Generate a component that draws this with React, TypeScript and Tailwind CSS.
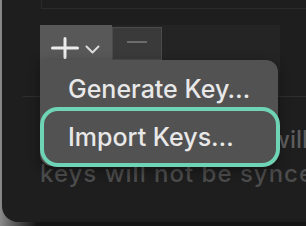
import React from 'react';

const font = { fontFamily: 'Inter, "Noto Sans", sans-serif' };

const App: React.FC = () => {
  return (
    <div className="w-[306px] h-[226px] bg-linear-to-r from-[#8a8a8a] to-[#151515] to-[12%] overflow-hidden" style={font}>
      <div className="relative ml-[2px] w-[304px] h-[222px] bg-[#1e1e1e] rounded-bl-[16px] overflow-hidden">
        {/* box above */}
        <div className="ml-[39px] h-[9px] border-l border-b border-[#2b2b2b]" />

        {/* table area with +/- bar */}
        <div className="ml-[38px] mt-[16px] w-[240px] h-[71px] bg-[#242424]">
          <div className="flex items-start">
            <div className="w-[72px] h-[35px] bg-[#585858] flex items-start pt-[12px] pl-[11px] gap-[6px]">
              <svg width="28" height="22" viewBox="0 0 28 22" className="text-[#ececec]">
                <path d="M14 1.5v19M1.5 11h25" stroke="currentColor" strokeWidth="3" strokeLinecap="round" />
              </svg>
              <svg width="15" height="9" viewBox="0 0 15 9" className="mt-[8px] text-[#dcdcdc]">
                <path d="M1.5 1.5l6 6 6-6" stroke="currentColor" strokeWidth="2" fill="none" strokeLinecap="round" strokeLinejoin="round" />
              </svg>
            </div>
            <div className="w-[50px] h-[33px] mt-[2px] bg-[#3a3a3a] border border-[#4b4b4b] flex items-center justify-center">
              <div className="w-[20px] h-[2px] mt-[-4px] bg-[#6c6c6c]" />
            </div>
          </div>
        </div>

        {/* divider line */}
        <div className="ml-[21px] h-px bg-[#2e2e2e]" />

        {/* background text */}
        <div className="mt-[28px] text-[24px] leading-[30px] font-medium whitespace-nowrap">
          <div className="pl-[268px] text-[#5c5c5c]">will</div>
          <div className="pl-[38px] mt-[4px] tracking-[1px] text-[#4c4c4c]">keys will not be synced</div>
        </div>

        {/* dropdown menu */}
        <div className="absolute left-[38px] top-[60px] w-[238px] h-[106px] bg-[#525252] rounded-r-[12px] rounded-bl-[12px] shadow-[0_4px_12px_rgba(0,0,0,0.4)]">
          <div className="pl-[28px] pt-[14px] text-[25px] leading-[30px] font-medium text-[#e8e8e8]">
            Generate Key…
          </div>
        </div>

        {/* highlighted item */}
        <div className="absolute left-[38px] top-[107px] w-[240px] h-[60px] rounded-[18px] border-[4px] border-[#6fd3b6] bg-[#525252] flex items-center pl-[24px]">
          <span className="text-[25px] leading-[30px] font-medium text-[#e8e8e8]">Import Keys…</span>
        </div>
      </div>
    </div>
  );
};

export default App;
